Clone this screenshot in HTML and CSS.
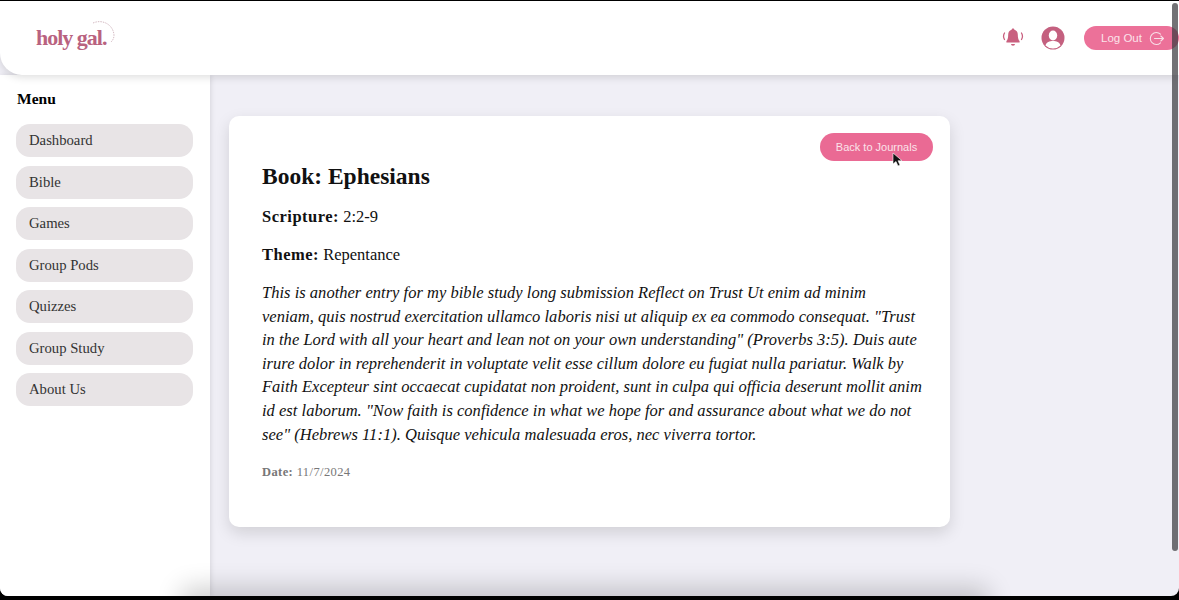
FILE: index.html
```html
<!DOCTYPE html>
<html>

<head>
    <meta charset="utf-8">
    <title>holy gal. - Journal</title>
    <link rel="stylesheet" href="styles.css">
</head>

<body>
    <div class="frame">
        <div class="header">
            <div class="logo">
                <span class="logo-text">holy gal.</span>
                <svg class="logo-arc" width="30" height="30" viewBox="0 0 30 30">
                    <path d="M3 4 C12 0 23 5 24 16 C24 19 23 21 21 23" fill="none" stroke="#c9a9b4" stroke-width="0.8" stroke-dasharray="1.5 1"/>
                </svg>
            </div>
            <div class="header-right">
                <svg class="bell" width="22" height="20" viewBox="0 0 22 20">
                    <path d="M11 0.500c.8 0 1.300.5 1.400 1.200 2.300.6 3.400 2.500 3.400 5 0 3.500.7 5.300 1.800 6.400v1.400H4.400v-1.400c1.100-1.100 1.800-2.900 1.800-6.400 0-2.500 1.100-4.400 3.400-5 .1-.7.6-1.200 1.400-1.200z" fill="#c9607f"/>
                    <path d="M9 16h4a2 1.800 0 0 1-4 0z" fill="#c9607f"/>
                    <path d="M2.500 5c-1.200 2-1.200 4.500 0 6.500M19.500 5c1.200 2 1.200 4.500 0 6.500" fill="none" stroke="#c9607f" stroke-width="1.300" stroke-linecap="round"/>
                </svg>
                <svg class="avatar" width="24" height="24" viewBox="0 0 24 24">
                    <circle cx="12" cy="12" r="11.500" fill="#c4607f"/>
                    <ellipse cx="12" cy="9.500" rx="4.200" ry="5" fill="#fff"/>
                    <path d="M4.500 19.500c1-3.500 4-4.500 7.500-4.500s6.500 1 7.500 4.500A10.500 10.500 0 0 1 12 22.500a10.500 10.500 0 0 1-7.500-3z" fill="#fff"/>
                </svg>
                <button class="logout">
                    Log Out
                    <svg width="15" height="15" viewBox="0 0 15 15">
                        <path d="M11.500 3.200A6 6 0 1 0 11.500 11.800" fill="none" stroke="#f8dfe7" stroke-width="1.100" stroke-linecap="round"/>
                        <path d="M5.500 7.500h9M11.800 5l2.700 2.500-2.700 2.500" fill="none" stroke="#f8dfe7" stroke-width="1.100" stroke-linecap="round" stroke-linejoin="round"/>
                    </svg>
                </button>
            </div>
        </div>

        <div class="body-row">
            <div class="sidebar">
                <div class="menu-title">Menu</div>
                <ul class="menu">
                    <li>Dashboard</li>
                    <li>Bible</li>
                    <li>Games</li>
                    <li>Group Pods</li>
                    <li>Quizzes</li>
                    <li>Group Study</li>
                    <li>About Us</li>
                </ul>
            </div>

            <div class="content">
                <div class="card">
                    <div class="card-top">
                        <button class="back">Back to Journals</button>
                    </div>
                    <h2 class="book">Book: Ephesians</h2>
                    <p class="line"><b>Scripture:</b> 2:2-9</p>
                    <p class="line"><b>Theme:</b> Repentance</p>
                    <p class="entry">This is another entry for my bible study long submission Reflect on Trust Ut enim ad minim veniam, quis nostrud exercitation ullamco laboris nisi ut aliquip ex ea commodo consequat. "Trust in the Lord with all your heart and lean not on your own understanding" (Proverbs 3:5). Duis aute irure dolor in reprehenderit in voluptate velit esse cillum dolore eu fugiat nulla pariatur. Walk by Faith Excepteur sint occaecat cupidatat non proident, sunt in culpa qui officia deserunt mollit anim id est laborum. "Now faith is confidence in what we hope for and assurance about what we do not see" (Hebrews 11:1). Quisque vehicula malesuada eros, nec viverra tortor.</p>
                    <p class="date"><b>Date:</b> 11/7/2024</p>
                </div>
            </div>
        </div>

        <!-- next card peeking in at the bottom of the page, only its shadow shows -->
        <div class="next-card"></div>
        <div class="scrollbar"></div>
        <svg class="cursor" width="12" height="16" viewBox="0 0 12 16">
            <path d="M1 1v11l3-2.500 2 4.500 2-1-2-4.300h4z" fill="#111" stroke="#fff" stroke-width="0.600"/>
        </svg>
    </div>
</body>

</html>
```

FILE: styles.css
```css
html,
body {
    margin: 0;
    padding: 0;
    height: 600px;
    overflow: hidden;
    background: #000;
}

ul,
li {
    margin: 0;
    padding: 0;
    list-style: none;
}

.frame {
    position: relative;
    height: 595px;
    margin-top: 1px;
    background: #f0eff6;
    border-radius: 0 0 8px 8px;
    overflow: hidden;
    display: flex;
    flex-direction: column;
    font-family: "Liberation Serif", serif;
    color: #111;
}

.header {
    position: relative;
    z-index: 3;
    flex: none;
    height: 74px;
    background: #fff;
    border-bottom-left-radius: 22px;
    box-shadow: 0 2px 8px rgba(0, 0, 0, 0.14);
    display: flex;
    align-items: center;
    justify-content: space-between;
}

.logo {
    position: relative;
    margin-left: 36px;
}

.logo-text {
    font-size: 22px;
    font-weight: bold;
    letter-spacing: -1px;
    color: #b9627f;
}

.logo-arc {
    position: absolute;
    left: 54px;
    top: -6px;
}

.header-right {
    display: flex;
    align-items: center;
}

.bell {
    margin-right: 17px;
}

.avatar {
    margin-right: 19px;
}

.logout {
    width: 95px;
    height: 24px;
    padding: 0 0 0 17px;
    border: none;
    border-radius: 12px;
    background: #ec7199;
    color: #fbe3ea;
    font-family: "Liberation Sans", sans-serif;
    font-size: 11.500px;
    display: flex;
    align-items: center;
    gap: 7px;
}

.body-row {
    flex: 1;
    display: flex;
    min-height: 0;
}

.sidebar {
    position: relative;
    z-index: 1;
    flex: none;
    width: 210px;
    box-sizing: border-box;
    padding: 15px 16px 0;
    background: #fff;
    box-shadow: 1px 0 5px rgba(0, 0, 0, 0.1);
}

.menu-title {
    margin: 0 0 16px 1px;
    font-size: 15.500px;
    font-weight: bold;
    line-height: 18px;
    color: #000;
}

.menu {
    display: flex;
    flex-direction: column;
    gap: 8.500px;
    width: 177px;
}

.menu li {
    height: 33px;
    line-height: 32px;
    padding-left: 13px;
    background: #e8e4e6;
    border-radius: 14px;
    font-size: 14.700px;
    color: #333;
}

.content {
    flex: 1;
    padding: 41px 0 0 19px;
}

.card {
    box-sizing: border-box;
    width: 721px;
    height: 411px;
    padding: 17px 28px 0 33px;
    background: #fff;
    border-radius: 10px;
    box-shadow: 0 6px 16px rgba(0, 0, 0, 0.13);
}

.card-top {
    display: flex;
    justify-content: flex-end;
    margin-right: -11px;
}

.back {
    width: 113px;
    height: 28px;
    border: none;
    border-radius: 14px;
    background: #ea6a94;
    color: #fbe3ea;
    font-family: "Liberation Sans", sans-serif;
    font-size: 11px;
}

.book {
    margin: 1px 0 0;
    font-size: 23.500px;
    line-height: 28px;
    font-weight: bold;
    color: #111;
}

.line {
    margin: 15px 0 0;
    font-size: 16.500px;
    line-height: 24px;
}

.line + .line {
    margin-top: 14px;
}

.line b {
    letter-spacing: 0.5px;
}

.entry {
    margin: 14px 0 0;
    font-size: 16.500px;
    line-height: 23.600px;
    font-style: italic;
    letter-spacing: 0.02px;
}

.date {
    margin: 18px 0 0;
    font-size: 12.500px;
    line-height: 16px;
    letter-spacing: 0.4px;
    color: #777;
}

.next-card {
    position: absolute;
    z-index: 2;
    left: 190px;
    bottom: -20px;
    width: 790px;
    height: 20px;
    box-shadow: 0 0 26px 8px rgba(0, 0, 0, 0.2);
}

.scrollbar {
    position: absolute;
    z-index: 4;
    right: 1px;
    top: 2px;
    width: 6px;
    height: 548px;
    border-radius: 3px;
    background: rgba(60, 60, 64, 0.72);
}

.cursor {
    position: absolute;
    z-index: 5;
    left: 892px;
    top: 151px;
}
```
